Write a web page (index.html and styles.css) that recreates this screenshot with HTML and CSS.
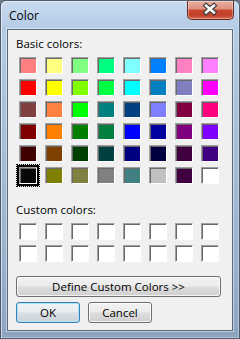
FILE: index.html
```html
<!DOCTYPE html>
<html>
<head>
<meta charset="utf-8">
<link rel="stylesheet" href="styles.css">
</head>
<body>
<div class="window">
  <div class="titlebar">
    <span class="title">Color</span>
    <div class="close">
      <svg width="47" height="19" viewBox="0 0 47 19">
        <path d="M19.5 5.5 L27.5 12.5 M27.5 5.5 L19.5 12.5" stroke="#3b3b3b" stroke-width="5" stroke-linecap="square" fill="none"/>
        <path d="M19.5 5.5 L27.5 12.5 M27.5 5.5 L19.5 12.5" stroke="#ffffff" stroke-width="2.6" stroke-linecap="square" fill="none"/>
      </svg>
    </div>
  </div>
  <div class="client">
    <div class="label">Basic colors:</div>
    <div class="grid basic">
      <div class="sw" style="background:#ff8080"></div>
      <div class="sw" style="background:#ffff80"></div>
      <div class="sw" style="background:#80ff80"></div>
      <div class="sw" style="background:#00ff80"></div>
      <div class="sw" style="background:#80ffff"></div>
      <div class="sw" style="background:#0080ff"></div>
      <div class="sw" style="background:#ff80c0"></div>
      <div class="sw" style="background:#ff80ff"></div>

      <div class="sw" style="background:#ff0000"></div>
      <div class="sw" style="background:#ffff00"></div>
      <div class="sw" style="background:#80ff00"></div>
      <div class="sw" style="background:#00ff40"></div>
      <div class="sw" style="background:#00ffff"></div>
      <div class="sw" style="background:#0080c0"></div>
      <div class="sw" style="background:#8080c0"></div>
      <div class="sw" style="background:#ff00ff"></div>

      <div class="sw" style="background:#804040"></div>
      <div class="sw" style="background:#ff8040"></div>
      <div class="sw" style="background:#00ff00"></div>
      <div class="sw" style="background:#008080"></div>
      <div class="sw" style="background:#004080"></div>
      <div class="sw" style="background:#8080ff"></div>
      <div class="sw" style="background:#800040"></div>
      <div class="sw" style="background:#ff0080"></div>

      <div class="sw" style="background:#800000"></div>
      <div class="sw" style="background:#ff8000"></div>
      <div class="sw" style="background:#008000"></div>
      <div class="sw" style="background:#008040"></div>
      <div class="sw" style="background:#0000ff"></div>
      <div class="sw" style="background:#0000a0"></div>
      <div class="sw" style="background:#800080"></div>
      <div class="sw" style="background:#8000ff"></div>

      <div class="sw" style="background:#400000"></div>
      <div class="sw" style="background:#804000"></div>
      <div class="sw" style="background:#004000"></div>
      <div class="sw" style="background:#004040"></div>
      <div class="sw" style="background:#000080"></div>
      <div class="sw" style="background:#000040"></div>
      <div class="sw" style="background:#400040"></div>
      <div class="sw" style="background:#400080"></div>

      <div class="sw selected" style="background:#080808"></div>
      <div class="sw" style="background:#808000"></div>
      <div class="sw" style="background:#808040"></div>
      <div class="sw" style="background:#808080"></div>
      <div class="sw" style="background:#408080"></div>
      <div class="sw" style="background:#c0c0c0"></div>
      <div class="sw" style="background:#400040"></div>
      <div class="sw" style="background:#ffffff"></div>
    </div>
    <div class="label custom-label">Custom colors:</div>
    <div class="grid custom">
      <div class="sw"></div><div class="sw"></div><div class="sw"></div><div class="sw"></div>
      <div class="sw"></div><div class="sw"></div><div class="sw"></div><div class="sw"></div>
      <div class="sw"></div><div class="sw"></div><div class="sw"></div><div class="sw"></div>
      <div class="sw"></div><div class="sw"></div><div class="sw"></div><div class="sw"></div>
    </div>
    <button class="btn wide">Define Custom Colors &gt;&gt;</button>
    <div class="actions">
      <button class="btn default">OK</button>
      <button class="btn">Cancel</button>
    </div>
  </div>
</div>
</body>
</html>
```

FILE: styles.css
```css
html, body {
  margin: 0;
  padding: 0;
  background: #6b7b8c;
}

body {
  width: 240px;
  height: 339px;
  overflow: hidden;
  font-family: "Open Sans", "Liberation Sans", sans-serif;
  font-size: 11.5px;
  line-height: 15px;
  color: #000;
}

.window {
  box-sizing: border-box;
  width: 240px;
  height: 339px;
  border: 1px solid #4d5a69;
  border-radius: 6px 6px 0 0;
  background: linear-gradient(180deg, #c8dbef 0px, #bcd2ea 16px, #b3cae4 29px, #a9c0da 120px, #99b1cc 260px, #8ca4c0 339px);
  box-shadow: inset 1px 1px 0 rgba(255,255,255,0.55), inset -1px -1px 0 rgba(255,255,255,0.35);
  display: flex;
  flex-direction: column;
  padding: 0 6px 7px 6px;
}

.titlebar {
  height: 28px;
  display: flex;
  justify-content: space-between;
  align-items: flex-start;
  margin: 0 -6px;
  padding: 0 5px 0 8px;
}

.title {
  margin-top: 7px;
  font-size: 12px;
  color: #000;
}

.close {
  width: 47px;
  height: 19px;
  box-sizing: border-box;
  margin-top: 0;
  border: 1px solid #6b2a20;
  border-top: none;
  border-radius: 0 0 5px 5px;
  background: linear-gradient(180deg, #eab0a2 0%, #de907e 42%, #c8472f 52%, #c13f27 78%, #d4694b 100%);
  box-shadow: inset 0 0 0 1px rgba(255,255,255,0.35);
  display: flex;
}

.close svg {
  display: block;
  margin: -1px 0 0 -1px;
}

.client {
  flex: 1;
  background: #f0f0f0;
  border: 1px solid #5b6a7b;
  box-shadow: 0 0 0 1px rgba(255,255,255,0.45);
  display: flex;
  flex-direction: column;
  align-items: flex-start;
  padding: 6px 0 0 8px;
}

.label {
  height: 15px;
}

.grid {
  display: grid;
  grid-template-columns: repeat(8, 18px);
  grid-auto-rows: 17px;
  column-gap: 8px;
  row-gap: 5px;
  margin-left: 3px;
}

.basic {
  margin-top: 6px;
}

.custom-label {
  margin-top: 18px;
}

.custom {
  margin-top: 6px;
}

.sw {
  box-sizing: border-box;
  width: 18px;
  height: 17px;
  border: 1px solid;
  border-color: #a0a0a0 #ffffff #ffffff #a0a0a0;
  box-shadow: inset 1px 1px 0 #696969;
  background: #ffffff;
}

.sw.selected {
  box-shadow: inset 1px 1px 0 #696969, 0 0 0 2px #000;
  outline: 1px dotted #000;
  outline-offset: 2px;
}

.btn {
  box-sizing: border-box;
  height: 21px;
  padding: 0;
  margin: 0;
  font-family: "Open Sans", "Liberation Sans", sans-serif;
  font-size: 11.5px;
  line-height: 15px;
  color: #000;
  border: 1px solid #707070;
  border-radius: 3px;
  background: linear-gradient(180deg, #f2f2f2 0%, #ebebeb 48%, #dddddd 52%, #cfcfcf 100%);
  box-shadow: inset 0 0 0 1px rgba(255,255,255,0.75);
}

.wide {
  width: 205px;
  margin-top: 14px;
}

.actions {
  display: flex;
  gap: 8px;
  margin-top: 5px;
}

.actions .btn {
  width: 64px;
}

.btn.default {
  border-color: #3c7fb1;
  box-shadow: inset 0 0 0 1px #a8e3f9;
  background: linear-gradient(180deg, #f0f3f5 0%, #e8ecef 48%, #d9dfe3 52%, #cbd3d9 100%);
}
```
